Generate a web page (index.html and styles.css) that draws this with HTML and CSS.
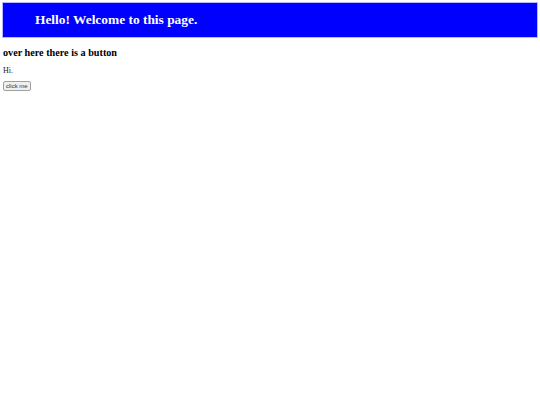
FILE: index.html
```html
<!DOCTYPE html>
<html>
<head>
<meta charset="utf-8">
<link rel="stylesheet" href="styles.css">
</head>
<body>
<header class="banner"><h1 class="banner-title">Hello! Welcome to this page.</h1></header>
<h3 class="subtitle">over here there is a button</h3>
<p class="greeting">Hi.</p>
<button class="btn">click me</button>
</body>
</html>
```
FILE: styles.css
```css
html, body { margin: 0; padding: 0; background: #fff; }
body { padding: 3px; font-family: "Liberation Serif", "Times New Roman", serif; color: #000; }
.banner {
  background: #0000ff;
  height: 34px;
  display: flex;
  align-items: center;
  padding-left: 32px;
  box-shadow: 0 0 0 1px #b8b8ff;
}
.banner-title { margin: 0; color: #fff; font-size: 13.4px; font-weight: bold; }
.subtitle { margin: 10px 0 0; font-size: 10.2px; font-weight: bold; }
.greeting { margin: 8px 0 0; font-size: 8px; line-height: 10px; color: #222; }
.btn {
  display: block;
  margin-top: 5px;
  font-family: "Liberation Sans", Arial, sans-serif;
  font-size: 6px;
  line-height: 8px;
  padding: 0 2px;
  border: 1px solid #a0a0a0;
  border-radius: 2px;
  background: #efefef;
  color: #333;
}
```
